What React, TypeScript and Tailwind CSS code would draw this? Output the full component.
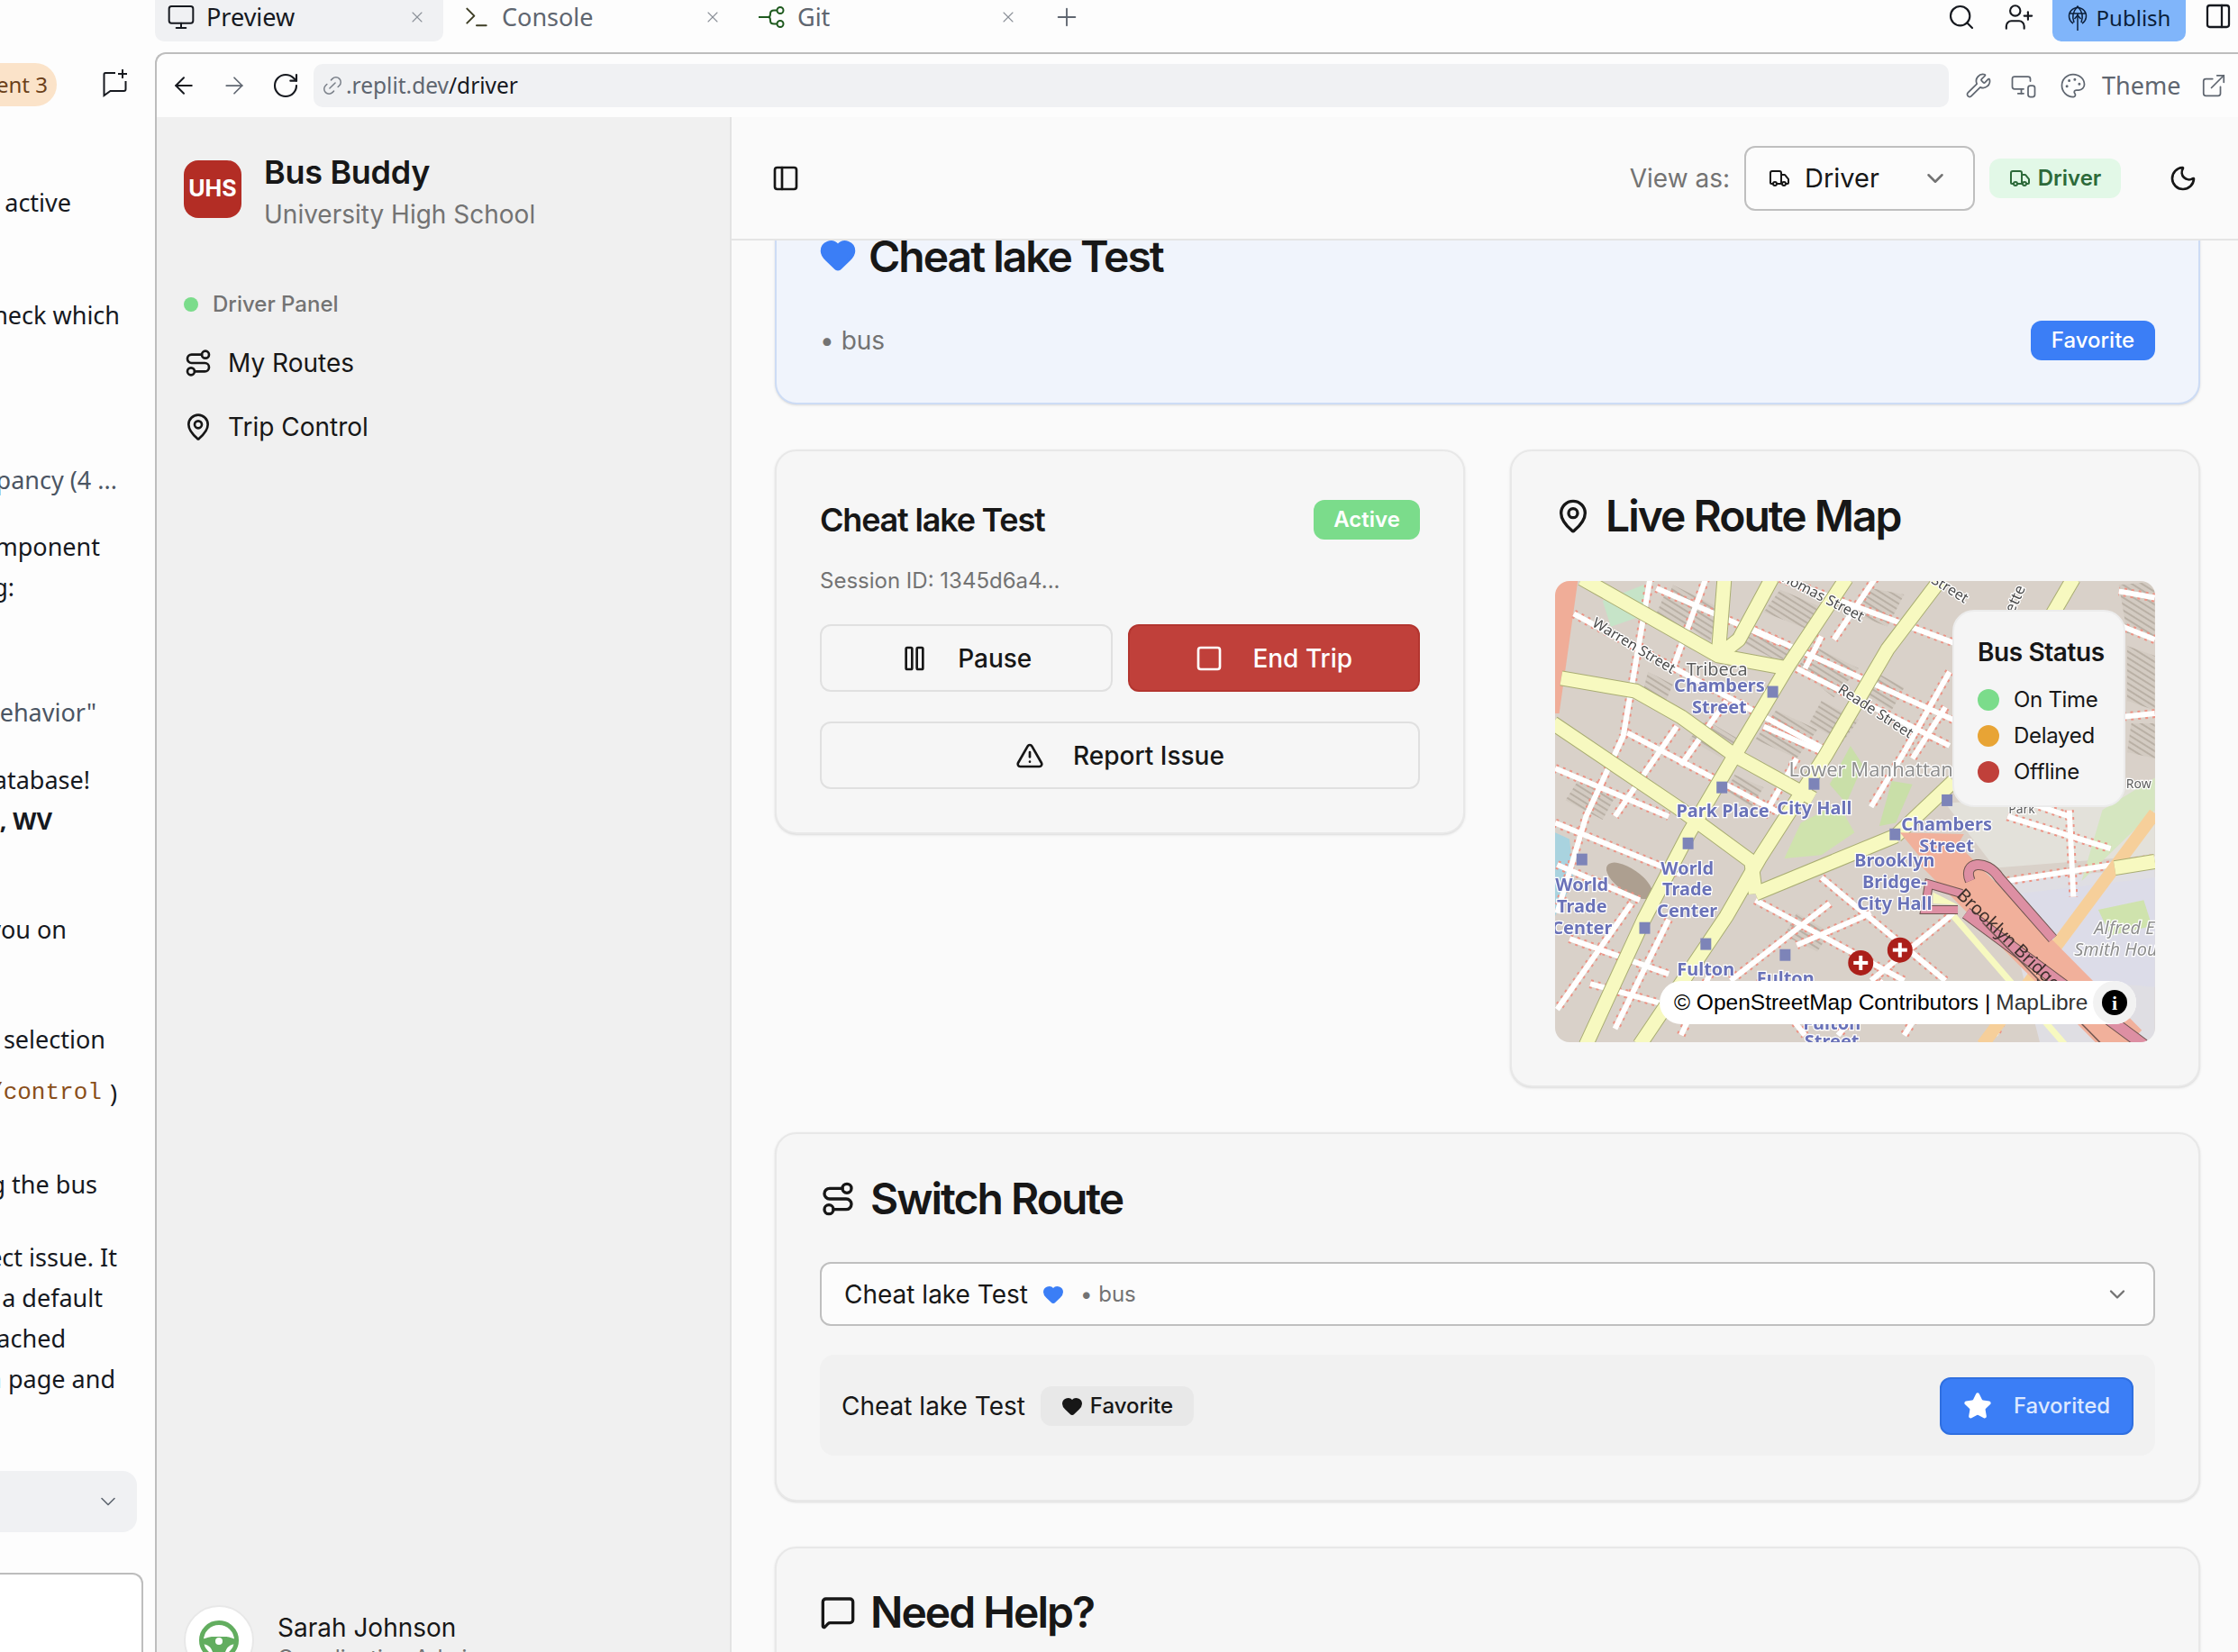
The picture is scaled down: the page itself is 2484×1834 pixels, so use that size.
import React from 'react';
import {
  ArrowLeft, ArrowRight, ChevronDown, ExternalLink, Heart, Link2, MapPin, MessageSquare,
  Monitor, MonitorSmartphone, Moon, Palette, PanelLeft, Pause, Plus, RotateCw, Route, Search, Square, Star,
  Terminal, TriangleAlert, Truck, UserPlus, Wrench, X as CloseIcon,
} from 'lucide-react';

// map picture coordinates were read off a zoomed crop, so convert them here
const mx = (z: number) => (z - 55) / 2.178;
const my = (z: number) => (z - 68) / 2.8;
const pts = (a: number[]) => {
  const out: string[] = [];
  for (let i = 0; i < a.length; i += 2) out.push(`${mx(a[i]).toFixed(1)},${my(a[i + 1]).toFixed(1)}`);
  return out.join(' ');
};

const yellowRoads = [
  [120, 60, 450, 300, 620, 340],
  [465, 60, 450, 300],
  [70, 370, 250, 410, 360, 490, 490, 610, 680, 745],
  [50, 510, 350, 770, 530, 940, 540, 1040],
  [760, 60, 620, 330, 490, 610, 380, 850, 270, 1120, 130, 1510],
  [580, 60, 500, 250, 450, 300],
  [990, 60, 860, 280, 710, 610, 550, 930, 470, 1110, 260, 1510],
  [880, 860, 540, 1040],
  [1020, 690, 880, 860],
  [1310, 60, 1260, 170],
  [1507, 940, 1410, 960],
];

const whiteStreets = [
  [100, 170, 720, 600],
  [300, 90, 600, 260],
  [600, 60, 1020, 260],
  [520, 210, 1020, 500],
  [640, 340, 1010, 580],
  [560, 520, 720, 610],
  [230, 540, 600, 790],
  [55, 650, 330, 800],
  [55, 820, 360, 980],
  [540, 1060, 900, 1310],
  [700, 990, 1000, 1310],
  [285, 60, 220, 550, 130, 800, 60, 1100],
  [350, 520, 200, 800],
  [830, 60, 730, 250],
  [700, 240, 660, 340],
  [1010, 350, 900, 600],
  [1000, 460, 920, 620],
  [1020, 1100, 820, 1310],
  [820, 1100, 640, 1200],
  [720, 1070, 480, 1310],
  [1150, 1000, 1507, 930],
  [1300, 780, 1310, 1050],
  [1507, 120, 1420, 100],
  [1507, 250, 1430, 210],
  [1507, 480, 1430, 490],
  [140, 1320, 420, 1420],
  [90, 1180, 330, 1290],
  [420, 60, 340, 340],
  [470, 440, 360, 640],
  [640, 620, 560, 800],
  [900, 600, 820, 770],
  [1030, 680, 1300, 800],
  [1150, 800, 1400, 900],
  [60, 950, 260, 1060],
  [240, 1070, 60, 1400],
  [330, 1120, 200, 1460],
  [430, 1290, 360, 1480],
  [850, 1310, 740, 1480],
  [550, 1300, 660, 1480],
  [980, 1320, 900, 1480],
  [1180, 1320, 1120, 1480],
];

const hatchBlocks = [
  [510, 200, 640, 270, 600, 320, 480, 240],
  [340, 80, 450, 150, 430, 260, 320, 150],
  [680, 270, 790, 340, 730, 430, 640, 340],
  [590, 470, 690, 530, 640, 620, 540, 560],
  [1420, 80, 1507, 70, 1507, 240, 1440, 230],
  [1440, 270, 1507, 300, 1507, 470, 1440, 440],
  [1450, 510, 1507, 510, 1507, 620, 1440, 600],
  [280, 350, 340, 390, 320, 450, 270, 400],
  [490, 670, 560, 710, 530, 770, 470, 720],
  [640, 1100, 720, 1160, 690, 1220, 610, 1170],
  [320, 110, 395, 150, 370, 220, 300, 170],
  [600, 95, 700, 150, 660, 215, 560, 165],
  [820, 90, 900, 110, 860, 210, 780, 170],
  [700, 440, 790, 500, 750, 570, 670, 510],
  [830, 350, 900, 400, 870, 470, 790, 410],
  [420, 500, 500, 560, 460, 620, 380, 560],
  [110, 690, 200, 740, 170, 810, 80, 750],
];

const blueLabels: [string, number, number][] = [
  ['Chambers', 453, 392], ['Street', 453, 459], ['Park Place', 461, 782], ['City Hall', 683, 774],
  ['Chambers', 1003, 825], ['Street', 1003, 892], ['Brooklyn', 877, 937], ['Bridge-', 877, 1004],
  ['City Hall', 877, 1070], ['World', 375, 960], ['Trade', 375, 1027], ['Center', 375, 1094],
  ['World', 120, 1012], ['Trade', 120, 1080], ['Center', 120, 1147], ['Fulton', 420, 1274],
  ['Fulton', 613, 1302], ['Fulton', 725, 1442], ['Street', 725, 1500],
];

const stations = [
  [582, 414], [459, 711], [682, 700], [377, 885], [120, 935], [272, 1148], [420, 1198], [612, 1232],
  [878, 857], [1004, 751],
];

const streetLabels: [string, number, number, number][] = [
  ['Warren Street', 240, 282, 31],
  ['Thomas Street', 690, 125, 27],
  ['Reade Street', 825, 485, 33],
  ['Street', 1005, 105, 32],
];

function MapDrawing() {
  return (
    <svg viewBox="0 0 667 512" preserveAspectRatio="none" className="block w-full h-full blur-[0.4px]">
      <defs>
        <pattern id="hatch" width="6" height="6" patternUnits="userSpaceOnUse" patternTransform="rotate(-58)">
          <rect width="6" height="6" fill="#d3cbc2" />
          <rect width="2" height="6" fill="#b9b0a5" />
        </pattern>
      </defs>
      <rect width="667" height="512" fill="#d9d1c9" />
      <polygon points={pts([1130, 1000, 1507, 960, 1507, 1510, 1230, 1510])} fill="#dfdee3" />
      <polygon points={pts([1180, 1040, 1507, 990, 1507, 1330, 1320, 1310])} fill="#dcdce8" />
      <polygon points={pts([1000, 760, 1507, 700, 1507, 920, 1120, 960])} fill="#e3e1da" />
      <polygon points={pts([55, 68, 110, 68, 65, 480, 55, 480])} fill="#f0ad98" />
      <polygon points={pts([55, 850, 90, 870, 100, 1000, 55, 1110])} fill="#a9d3df" />
      <polygon points={pts([170, 130, 270, 80, 280, 170, 190, 210])} fill="#c6e4c8" />
      <polygon points={pts([720, 700, 770, 580, 800, 640, 760, 760])} fill="#c9dfa8" />
      <polygon points={pts([610, 930, 650, 820, 740, 760, 780, 850, 700, 920])} fill="#cfe3ad" />
      <polygon points={pts([840, 830, 870, 690, 920, 700, 880, 820])} fill="#c9dfa8" />
      <polygon points={pts([1330, 1000, 1507, 780, 1507, 680, 1380, 780])} fill="#d5e6c0" />
      <polygon points={pts([1370, 1090, 1480, 1060, 1500, 1140, 1400, 1170])} fill="#cfe3ad" />
      <ellipse cx={mx(235)} cy={my(1000)} rx="30" ry="13" transform={`rotate(35 ${mx(235)} ${my(1000)})`} fill="#ad9f90" />
      {hatchBlocks.map((b, i) => (
        <polygon key={i} points={pts(b)} fill="url(#hatch)" />
      ))}
      {whiteStreets.map((s, i) => (
        <polyline key={i} points={pts(s)} fill="none" stroke="#ec9385" strokeWidth="10" strokeDasharray="3 5" />
      ))}
      {whiteStreets.map((s, i) => (
        <polyline key={i} points={pts(s)} fill="none" stroke="#ffffff" strokeWidth="6" />
      ))}
      <polyline points={pts([1507, 790, 1090, 1510])} fill="none" stroke="#f6cf9a" strokeWidth="14" />
      {yellowRoads.map((r, i) => (
        <polyline key={i} points={pts(r)} fill="none" stroke="#a9ad72" strokeWidth="17" strokeLinejoin="round" />
      ))}
      {yellowRoads.map((r, i) => (
        <polyline key={i} points={pts(r)} fill="none" stroke="#f7f9c0" strokeWidth="15" strokeLinejoin="round" />
      ))}
      <polygon points={pts([890, 850, 1045, 855, 1010, 930, 960, 960])} fill="#f1b09b" />
      <polyline points={pts([970, 900, 1440, 1510])} fill="none" stroke="#f1b09b" strokeWidth="46" />
      <path
        d={`M${mx(1060)} ${my(1000)} C${mx(1040)} ${my(940)} ${mx(1100)} ${my(930)} ${mx(1130)} ${my(990)} L${mx(1260)} ${my(1180)}`}
        fill="none" stroke="#6f5550" strokeWidth="12"
      />
      <path
        d={`M${mx(1060)} ${my(1000)} C${mx(1040)} ${my(940)} ${mx(1100)} ${my(930)} ${mx(1130)} ${my(990)} L${mx(1260)} ${my(1180)}`}
        fill="none" stroke="#dd8fa3" strokeWidth="10"
      />
      <polyline points={pts([1040, 1040, 960, 1010, 950, 1090, 1030, 1090])} fill="none" stroke="#6f5550" strokeWidth="10" />
      <polyline points={pts([1040, 1040, 960, 1010, 950, 1090, 1030, 1090])} fill="none" stroke="#dd8fa3" strokeWidth="8" />
      <polygon points={pts([970, 1035, 1030, 1075, 970, 1070])} fill="#f7f9c0" />
      <polyline points={pts([1050, 1100, 1480, 1510])} fill="none" stroke="#6f5550" strokeWidth="14" />
      <polyline points={pts([1050, 1100, 1480, 1510])} fill="none" stroke="#dd8fa3" strokeWidth="12" />
      <polyline points={pts([1090, 1130, 1380, 1510])} fill="none" stroke="#6f5550" strokeWidth="1.5" />
      <polyline points={pts([1020, 1110, 1290, 1510])} fill="none" stroke="#f7f9c0" strokeWidth="7" />
      {stations.map(([x, y], i) => (
        <rect key={i} x={mx(x) - 6} y={my(y) - 7} width="12" height="13" fill="#7d84b8" />
      ))}
      <g fontFamily="'Noto Sans', sans-serif" style={{ paintOrder: 'stroke' }} stroke="#ffffff" strokeWidth="2.5">
        {blueLabels.map(([t, x, y], i) => (
          <text key={i} x={mx(x)} y={my(y) + 7} textAnchor="middle" fontSize="20" fontWeight="700" fill="#6a72b8">{t}</text>
        ))}
        {streetLabels.map(([t, x, y, r], i) => (
          <text key={i} x={mx(x)} y={my(y)} textAnchor="middle" fontSize="16" fill="#4a4a4a" transform={`rotate(${r} ${mx(x)} ${my(y)})`}>{t}</text>
        ))}
        <text x={mx(1180)} y={my(130)} textAnchor="middle" fontSize="17" fill="#4a4a4a" transform={`rotate(-65 ${mx(1180)} ${my(130)})`}>ette</text>
        <text x={mx(447)} y={my(342) + 7} textAnchor="middle" fontSize="20" fill="#5c5c5c">Tribeca</text>
        <text x={mx(820)} y={my(655) + 7} textAnchor="middle" fontSize="22" fill="#8f8f8f">Lower Manhattan</text>
        <text x={mx(1360)} y={my(1150) + 6} fontSize="20" fontStyle="italic" fill="#8e8e8e">Alfred E</text>
        <text x={mx(1312)} y={my(1217) + 6} fontSize="20" fontStyle="italic" fill="#8e8e8e">Smith Hou</text>
        <text x={mx(1025)} y={my(1048)} fontSize="20" fill="#3c2f2c" strokeWidth="0" transform={`rotate(44 ${mx(1025)} ${my(1048)})`}>Brooklyn Bridge</text>
        <text x={mx(1185)} y={my(790)} textAnchor="middle" fontSize="14" fill="#5c5c5c">Park</text>
        <text x={mx(1468)} y={my(712)} textAnchor="middle" fontSize="14" fill="#5c5c5c">Row</text>
      </g>
      {[[795, 1255], [890, 1215]].map(([x, y], i) => (
        <g key={i}>
          <circle cx={mx(x)} cy={my(y)} r="14" fill="#ab1f1a" />
          <rect x={mx(x) - 8} y={my(y) - 2} width="16" height="4" fill="#ffffff" />
          <rect x={mx(x) - 2} y={my(y) - 8} width="4" height="16" fill="#ffffff" />
        </g>
      ))}
    </svg>
  );
}

function GitIcon() {
  return (
    <svg width="32" height="32" viewBox="0 0 32 32" fill="none" stroke="#1f5a1f" strokeWidth="2">
      <path d="M1 16h11" />
      <path d="M12 16c2 0 2-1.500 2-4s1-3.500 4-3.500h3" />
      <path d="M12 16c2 0 2 1.500 2 4s1 3.500 4 3.500h3" />
      <circle cx="25" cy="8.500" r="3.500" />
      <circle cx="25" cy="23.500" r="3.500" />
    </svg>
  );
}

function NewChatIcon() {
  return (
    <svg width="30" height="34" viewBox="0 0 30 34" fill="none" stroke="#16191f" strokeWidth="2">
      <path d="M15 5H4a1.500 1.500 0 0 0-1.500 1.500V30l7-5h15a2 2 0 0 0 2-2V14" />
      <path d="M23 1v10M18 6h10" />
    </svg>
  );
}

function ChatLine({ pr, mt, children, tone }: { pr: string; mt: string; children: React.ReactNode; tone?: string }) {
  return (
    <div className={`flex justify-end overflow-hidden whitespace-nowrap h-[45px] leading-[45px] ${pr} ${mt} ${tone ?? 'text-[#16191f]'}`}>
      {children}
    </div>
  );
}

function ChatPanel() {
  return (
    <div className="w-[172px] shrink-0 h-full flex flex-col bg-[#fdfdfd] font-['Noto_Sans',sans-serif] text-[27px]">
      <div className="h-[130px] shrink-0 flex items-start pt-[70px]">
        <div className="h-[48px] w-[63px] rounded-r-[24px] bg-[#fbe3c9] text-[#6b4019] text-[24px] leading-[48px] flex justify-end pr-[10px] overflow-hidden whitespace-nowrap">
          ent 3
        </div>
        <div className="ml-[50px] mt-[6px]"><NewChatIcon /></div>
      </div>
      <ChatLine pr="pr-[93px]" mt="mt-[72px]">active</ChatLine>
      <ChatLine pr="pr-[39px]" mt="mt-[80px]">check which</ChatLine>
      <ChatLine pr="pr-[42px]" mt="mt-[138px]" tone="text-[#4b5563]">occupancy (4 ...</ChatLine>
      <ChatLine pr="pr-[61px]" mt="mt-[29px]">component</ChatLine>
      <ChatLine pr="pr-[156px]" mt="mt-0">ing:</ChatLine>
      <ChatLine pr="pr-[65px]" mt="mt-[94px]" tone="text-[#4b5563]">behavior"</ChatLine>
      <ChatLine pr="pr-[72px]" mt="mt-[30px]">database!</ChatLine>
      <ChatLine pr="pr-[114px]" mt="mt-0"><b>, WV</b></ChatLine>
      <ChatLine pr="pr-[98px]" mt="mt-[76px]">you on</ChatLine>
      <ChatLine pr="pr-[55px]" mt="mt-[77px]">selection</ChatLine>
      <ChatLine pr="pr-[42px]" mt="mt-[15px]">
        <span className="font-['Liberation_Mono',monospace] text-[26px] text-[#8a4f1a]">/control</span>
        <span className="ml-[9px]">)</span>
      </ChatLine>
      <ChatLine pr="pr-[64px]" mt="mt-[56px]">ing the bus</ChatLine>
      <ChatLine pr="pr-[42px]" mt="mt-[36px]">direct issue. It</ChatLine>
      <ChatLine pr="pr-[58px]" mt="mt-0">as a default</ChatLine>
      <ChatLine pr="pr-[99px]" mt="mt-0">cached</ChatLine>
      <ChatLine pr="pr-[44px]" mt="mt-0">in page and</ChatLine>
      <div className="mt-[80px] h-[68px] w-[152px] shrink-0 rounded-r-[16px] bg-[#f0f1f3] flex items-center justify-end pr-[18px]">
        <ChevronDown className="w-[28px] h-[28px] text-[#5f6670]" strokeWidth={1.4} />
      </div>
      <div className="mt-[45px] w-[159px] flex-1 rounded-tr-[12px] border-t-2 border-r-2 border-[#bdbdbd] bg-white" />
    </div>
  );
}

function Tab({ active, icon, label, muted }: { active?: boolean; icon: React.ReactNode; label: string; muted?: boolean }) {
  return (
    <div className={`w-[320px] h-[46px] shrink-0 rounded-b-[10px] flex items-center pl-[13px] pr-[19px] pb-[8px] ${active ? 'bg-[#f0f1f3]' : ''}`}>
      {icon}
      <span className={`ml-[12px] text-[27px] ${muted ? 'text-[#5f6670]' : 'text-[#16191f]'}`}>{label}</span>
      <CloseIcon className="ml-auto w-[20px] h-[20px] text-[#8b9098]" strokeWidth={1.3} />
    </div>
  );
}

function TopBar() {
  return (
    <div className="h-[58px] shrink-0 flex items-start font-['Noto_Sans',sans-serif] bg-[#fdfdfd]">
      <div className="flex gap-[8px]">
        <Tab active icon={<Monitor className="w-[32px] h-[32px] text-[#16191f]" strokeWidth={1.5} />} label="Preview" />
        <Tab icon={<Terminal className="w-[32px] h-[32px] text-[#3d3d24]" strokeWidth={1.5} />} label="Console" muted />
        <Tab icon={<GitIcon />} label="Git" muted />
      </div>
      <Plus className="ml-[20px] mt-[3px] w-[32px] h-[32px] text-[#5f6670]" strokeWidth={1.4} />
      <div className="ml-auto flex items-start pr-[6px]">
        <Search className="mt-[3px] w-[32px] h-[32px] text-[#16191f]" strokeWidth={1.6} />
        <UserPlus className="ml-[31px] mt-[2px] w-[34px] h-[34px] text-[#16191f]" strokeWidth={1.5} />
        <div className="ml-[20px] h-[46px] w-[148px] rounded-b-[10px] bg-[#80b5fa] flex items-center justify-center gap-[10px] pb-[6px] text-[24px] text-[#0b1f3a]">
          <GlobeUp />
          Publish
        </div>
        <PanelLeft className="ml-[20px] mt-[2px] w-[32px] h-[32px] rotate-180 text-[#16191f]" strokeWidth={1.7} />
      </div>
    </div>
  );
}

function GlobeUp() {
  return (
    <svg width="22" height="30" viewBox="0 0 22 30" fill="none" stroke="#0b1f3a" strokeWidth="1.5">
      <path d="M6 21a9.500 9.500 0 1 1 10 0" />
      <path d="M2 10h18M11 29V10M7 20c-2-5-1.500-12 4-18 5.500 6 6 13 4 18" />
      <path d="M7.500 16 11 12l3.500 4" />
    </svg>
  );
}

function AddressBar() {
  return (
    <div className="h-[70px] shrink-0 flex items-center font-['Noto_Sans',sans-serif] bg-[#fdfdfd] rounded-tl-[12px]">
      <ArrowLeft className="ml-[15px] w-[30px] h-[30px] text-[#16191f]" strokeWidth={1.6} />
      <ArrowRight className="ml-[26px] w-[30px] h-[30px] text-[#5f6670]" strokeWidth={1.4} />
      <RotateCw className="ml-[26px] w-[32px] h-[32px] text-[#16191f]" strokeWidth={1.6} />
      <div className="ml-[15px] w-[1815px] h-[48px] rounded-[10px] bg-[#f0f1f3] flex items-center pl-[8px] text-[24.5px]">
        <Link2 className="w-[26px] h-[26px] -rotate-45 text-[#7b818a]" strokeWidth={1.4} />
        <span className="ml-[2px] text-[#5f6670]">.replit.dev</span>
        <span className="text-[#16191f]">/driver</span>
      </div>
      <Wrench className="ml-[18px] w-[30px] h-[30px] text-[#5f6670]" strokeWidth={1.4} />
      <MonitorSmartphone className="ml-[20px] w-[30px] h-[30px] text-[#5f6670]" strokeWidth={1.4} />
      <Palette className="ml-[25px] w-[30px] h-[30px] text-[#5f6670]" strokeWidth={1.4} />
      <span className="ml-[17px] text-[27px] text-[#5f6670]">Theme</span>
      <ExternalLink className="ml-[22px] w-[30px] h-[30px] text-[#5f6670]" strokeWidth={1.4} />
    </div>
  );
}

function Sidebar() {
  return (
    <aside className="w-[638px] shrink-0 h-full bg-[#f0f0f0] border-r-2 border-[#e3e3e3] pl-[30px] flex flex-col">
      <div className="mt-[48px] flex items-start gap-[25px]">
        <div className="w-[64px] h-[64px] rounded-[16px] bg-[#b32d25] flex items-center justify-center text-white font-bold text-[25px]">UHS</div>
        <div className="-mt-[9px]">
          <div className="text-[36px] leading-[44px] font-semibold text-[#171717] tracking-[-0.3px]">Bus Buddy</div>
          <div className="text-[28px] leading-[40px] text-[#737373] mt-[5px]">University High School</div>
        </div>
      </div>
      <div className="mt-[64px] flex items-center h-[32px] text-[24px] font-medium text-[#737373]">
        <span className="w-[16px] h-[16px] rounded-full bg-[#7bdc8b]" />
        <span className="ml-[16px]">Driver Panel</span>
      </div>
      <div className="mt-[29px] flex items-center h-[40px] text-[28px] text-[#171717]">
        <Route className="w-[32px] h-[32px]" strokeWidth={2} />
        <span className="ml-[17px]">My Routes</span>
      </div>
      <div className="mt-[31px] flex items-center h-[40px] text-[28px] text-[#171717]">
        <MapPin className="w-[32px] h-[32px]" strokeWidth={2} />
        <span className="ml-[17px]">Trip Control</span>
      </div>
      <div className="mt-auto -mb-[30px] flex items-start h-[82px]">
        <div className="w-[78px] h-[78px] rounded-full bg-white border-2 border-[#e8e8e8] flex items-center justify-center">
          <svg width="46" height="46" viewBox="0 0 46 46" fill="none">
            <circle cx="23" cy="23" r="19.500" stroke="#62ad5f" strokeWidth="5" />
            <path d="M4 22c6-2 9-3 12-3h14c3 0 6 1 12 3l-1 5c-6 1-9 3-11 9v6H16v-6c-2-6-5-8-11-9z" fill="#62ad5f" />
            <circle cx="23" cy="24" r="4" fill="#ffffff" />
          </svg>
        </div>
        <div className="ml-[26px] mt-[7px]">
          <div className="text-[28px] leading-[36px] text-[#171717]">Sarah Johnson</div>
          <div className="text-[24px] leading-[32px] text-[#737373]">Coordination Admin</div>
        </div>
      </div>
    </aside>
  );
}

const card = 'rounded-[24px] border-2 border-[#e8e8e8] bg-[#f6f6f6] shadow-sm p-[48px]';
const outlineBtn = 'h-[75px] rounded-[12px] border-2 border-[#e0e0e0] bg-[#f6f6f6] flex items-center justify-center gap-[32px] text-[28px] font-medium text-[#171717]';

function Heading({ icon, label }: { icon: React.ReactNode; label: string }) {
  return (
    <div className="flex items-center gap-[16px] h-[48px] text-[48px] font-semibold tracking-[-2px] text-[#171717]">
      {icon}
      {label}
    </div>
  );
}

function Main() {
  return (
    <main className="flex-1 min-w-0 h-full flex flex-col bg-[#fafafa] overflow-hidden">
      <header className="h-[137px] shrink-0 border-b-2 border-[#e5e5e5] flex items-center pl-[44px] pr-[45px] z-10 bg-[#fafafa]">
        <PanelLeft className="w-[32px] h-[32px] text-[#171717]" strokeWidth={2} />
        <span className="ml-auto text-[28px] text-[#737373]">View as:</span>
        <div className="ml-[16px] w-[256px] h-[72px] rounded-[12px] border-2 border-[#bfbfbf] bg-[#fcfcfc] flex items-center pl-[25px] pr-[27px] text-[29px] text-[#171717]">
          <Truck className="w-[24px] h-[24px]" strokeWidth={2} />
          <span className="ml-[16px]">Driver</span>
          <ChevronDown className="ml-auto w-[30px] h-[30px] text-[#737373]" strokeWidth={2} />
        </div>
        <div className="ml-[16px] w-[146px] h-[44px] rounded-[12px] bg-[#e2f8e7] flex items-center justify-center gap-[8px] text-[24px] font-semibold text-[#2d6a3a]">
          <Truck className="w-[24px] h-[24px]" strokeWidth={2} />
          Driver
        </div>
        <Moon className="ml-[53px] w-[32px] h-[32px] text-[#171717]" strokeWidth={2} />
      </header>
      <div className="flex-1 min-h-0 overflow-hidden pl-[48px] pr-[42px]">
        <section className="-mt-[40px] h-[222px] rounded-[24px] border-2 border-[#cddcf5] bg-[#f0f4fc] shadow-sm px-[48px] pt-[32px]">
          <div className="flex items-center gap-[13px] h-[48px] text-[48px] font-semibold tracking-[-2px] text-[#171717]">
            <Heart className="w-[42px] h-[42px] -ml-[1px] text-[#3b7ef6] fill-[#3b7ef6] -mt-[4px]" />
            Cheat lake Test
          </div>
          <div className="mt-[47px] flex items-center justify-between">
            <span className="text-[28px] text-[#737373]">• bus</span>
            <span className="h-[44px] w-[138px] rounded-[12px] bg-[#3b7ef6] text-white text-[24px] font-medium flex items-center justify-center">Favorite</span>
          </div>
        </section>

        <div className="mt-[50px] grid grid-cols-2 gap-[50px] items-start">
          <section className={card}>
            <div className="flex items-center justify-between h-[44px] mt-[6px]">
              <span className="text-[36px] font-semibold tracking-[-1.2px] text-[#171717]">Cheat lake Test</span>
              <span className="w-[118px] h-[44px] rounded-[12px] bg-[#7bdc8b] text-white text-[24px] font-semibold flex items-center justify-center">Active</span>
            </div>
            <div className="mt-[28px] h-[36px] leading-[36px] text-[24px] text-[#737373]">Session ID: 1345d6a4...</div>
            <div className="mt-[30px] grid grid-cols-2 gap-[17px]">
              <div className={outlineBtn}>
                <Pause className="w-[32px] h-[32px]" strokeWidth={2} />
                Pause
              </div>
              <div className="h-[75px] rounded-[12px] border-2 border-[#b3352f] bg-[#c0403a] flex items-center justify-center gap-[32px] text-[28px] font-medium text-white">
                <Square className="w-[32px] h-[32px]" strokeWidth={2} />
                End Trip
              </div>
            </div>
            <div className={`${outlineBtn} mt-[33px]`}>
              <TriangleAlert className="w-[32px] h-[32px]" strokeWidth={2} />
              Report Issue
            </div>
          </section>

          <section className={card}>
            <Heading icon={<MapPin className="w-[40px] h-[40px]" strokeWidth={2} />} label="Live Route Map" />
            <div className="relative mt-[48px] h-[512px] rounded-[16px] overflow-hidden">
              <MapDrawing />
              <div className="absolute right-[33px] top-[32px] w-[192px] h-[219px] rounded-[24px] border-2 border-[#ececec] bg-[#f5f5f5] pl-[26px] pt-[25px]">
                <div className="text-[28px] leading-[40px] font-semibold tracking-[-0.4px] text-[#171717]">Bus Status</div>
                <div className="mt-[15px] flex flex-col gap-[4px] text-[24px] tracking-[-0.3px] text-[#171717]">
                  <div className="flex items-center gap-[16px] h-[36px]"><span className="w-[24px] h-[24px] rounded-full bg-[#7bdc8b]" />On Time</div>
                  <div className="flex items-center gap-[16px] h-[36px]"><span className="w-[24px] h-[24px] rounded-full bg-[#e8a435]" />Delayed</div>
                  <div className="flex items-center gap-[16px] h-[36px]"><span className="w-[24px] h-[24px] rounded-full bg-[#c0403a]" />Offline</div>
                </div>
              </div>
              <div className="absolute right-[21px] bottom-[20px] h-[48px] w-[529px] rounded-[24px] bg-white flex items-center pl-[16px] text-[24.5px] font-['Liberation_Sans',sans-serif] text-black whitespace-nowrap">
                © OpenStreetMap Contributors | <span className="ml-[6px] text-[#333]">MapLibre</span>
                <span className="ml-auto w-[48px] h-[48px] rounded-full bg-[#f2f2f2] flex items-center justify-center">
                  <span className="w-[28px] h-[28px] rounded-full bg-black text-white text-[22px] font-bold flex items-center justify-center font-['Liberation_Serif',serif]">i</span>
                </span>
              </div>
            </div>
          </section>
        </div>

        <section className={`${card} mt-[50px] h-[410px]`}>
          <Heading icon={<Route className="w-[40px] h-[40px]" strokeWidth={2} />} label="Switch Route" />
          <div className="mt-[46px] h-[71px] rounded-[12px] border-2 border-[#bfbfbf] bg-[#fcfcfc] flex items-center pl-[25px] pr-[26px] text-[28px] text-[#171717]">
            Cheat lake Test
            <Heart className="ml-[16px] w-[24px] h-[24px] text-[#3b7ef6] fill-[#3b7ef6]" />
            <span className="ml-[18px] text-[24px] text-[#737373]">• bus</span>
            <ChevronDown className="ml-auto w-[28px] h-[28px] text-[#737373]" strokeWidth={2} />
          </div>
          <div className="mt-[32px] h-[112px] rounded-[16px] bg-[#f1f1f1] flex items-center pl-[24px] pr-[24px] pt-[1px] text-[28px] text-[#171717]">
            Cheat lake Test
            <span className="ml-[17px] w-[170px] h-[44px] rounded-[12px] bg-[#e8e8e8] flex items-center justify-center gap-[8px] text-[24px] font-medium">
              <Heart className="w-[24px] h-[24px] fill-[#171717]" />
              Favorite
            </span>
            <span className="ml-auto w-[215px] h-[64px] rounded-[12px] border-2 border-[#2f6fe0] bg-[#3b7ef6] flex items-center justify-center gap-[24px] text-[24px] font-medium text-[#dce8ff]">
              <Star className="w-[32px] h-[32px] text-white fill-white" />
              Favorited
            </span>
          </div>
        </section>

        <section className={`${card} mt-[50px] h-[300px]`}>
          <div className="-mt-[1px]">
            <Heading icon={<MessageSquare className="w-[40px] h-[40px]" strokeWidth={2} />} label="Need Help?" />
          </div>
        </section>
      </div>
    </main>
  );
}

export default function App() {
  return (
    <div className="w-[2484px] h-[1834px] overflow-hidden flex bg-[#fdfdfd] font-['Inter',sans-serif]">
      <ChatPanel />
      <div className="flex-1 min-w-0 h-full flex flex-col">
        <TopBar />
        <div className="flex-1 min-h-0 flex flex-col border-t-2 border-l-2 border-[#bdbdbd] rounded-tl-[12px] overflow-hidden">
          <AddressBar />
          <div className="flex-1 min-h-0 flex">
            <Sidebar />
            <Main />
          </div>
        </div>
      </div>
    </div>
  );
}
